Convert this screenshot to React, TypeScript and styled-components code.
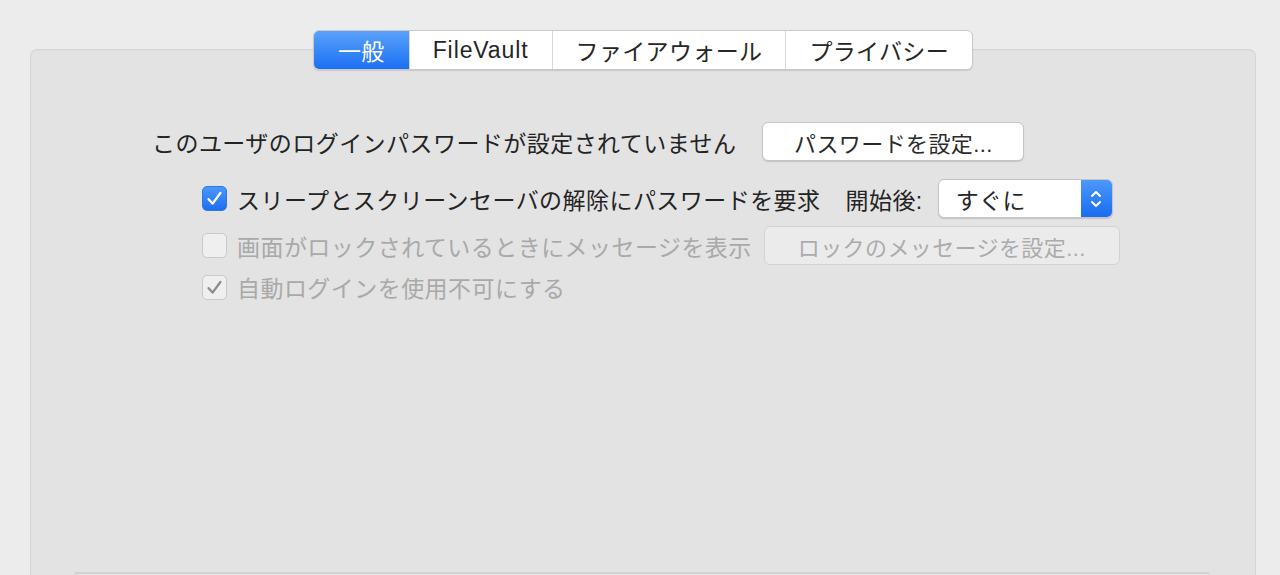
import React from "react";
import styled, { createGlobalStyle, css } from "styled-components";

const Global = createGlobalStyle`
  html, body { margin: 0; padding: 0; }
  body {
    background: #ececec;
    font-family: "Liberation Sans", "Noto Sans CJK JP", sans-serif;
    overflow: hidden;
    height: 575px;
  }
`;

const Page = styled.div`
  padding: 49px 24px 0 30px;
`;

const Panel = styled.div`
  background: #e3e3e3;
  border: 1px solid #d6d6d6;
  border-bottom: none;
  border-radius: 7px 7px 0 0;
  height: 540px;
  display: flex;
  flex-direction: column;
  box-shadow: inset 0 1px 1px rgba(0, 0, 0, 0.03);
`;

const TabRow = styled.div`
  display: flex;
  justify-content: center;
  margin-top: -20px;
`;

const TabBar = styled.div`
  display: flex;
  height: 38px;
  background: #ffffff;
  border: 1px solid #c9c9c9;
  border-radius: 6px;
  box-shadow: 0 1px 1px rgba(0, 0, 0, 0.12);
  overflow: hidden;
`;

const Tab = styled.div<{ $active?: boolean; $first?: boolean; $latin?: boolean }>`
  display: flex;
  align-items: center;
  padding: 0 23px;
  font-size: 23px;
  letter-spacing: ${(p) => (p.$latin ? "0.9px" : "0.35px")};
  color: #262626;
  border-left: ${(p) => (p.$first ? "none" : "1px solid #d8d8d8")};
  ${(p) =>
    p.$active &&
    css`
      background: linear-gradient(#5aa2fb, #1b6ff3);
      color: #ffffff;
      border-left: none;
      padding: 0 24px;
    `}
`;

const Content = styled.div`
  display: flex;
  flex-direction: column;
  padding-left: 121px;
  margin-top: 52px;
`;

const Row = styled.div<{ $indent?: number; $mt?: number; $h?: number }>`
  display: flex;
  align-items: center;
  height: ${(p) => p.$h ?? 39}px;
  margin-left: ${(p) => p.$indent ?? 0}px;
  margin-top: ${(p) => p.$mt ?? 0}px;
`;

const Label = styled.span<{ $disabled?: boolean; $gap?: number }>`
  font-size: 23px;
  letter-spacing: 0.45px;
  color: ${(p) => (p.$disabled ? "#a9a9a9" : "#232323")};
  margin-right: ${(p) => p.$gap ?? 0}px;
  white-space: nowrap;
`;

const Button = styled.div<{ $disabled?: boolean; $w: number }>`
  box-sizing: border-box;
  width: ${(p) => p.$w}px;
  height: 39px;
  display: flex;
  align-items: center;
  justify-content: center;
  border-radius: 6px;
  font-size: 22px;
  letter-spacing: 0.4px;
  ${(p) =>
    p.$disabled
      ? css`
          background: #ebebeb;
          border: 1px solid #d3d3d3;
          color: #ababab;
        `
      : css`
          background: #ffffff;
          border: 1px solid #c5c5c5;
          color: #2a2a2a;
          box-shadow: 0 1px 1px rgba(0, 0, 0, 0.14);
        `}
`;

const Box = styled.div<{ $variant: "on" | "off" | "dimOn" }>`
  box-sizing: border-box;
  width: 25px;
  height: 25px;
  border-radius: 5px;
  margin-right: 10px;
  display: flex;
  align-items: center;
  justify-content: center;
  ${(p) =>
    p.$variant === "on"
      ? css`
          background: linear-gradient(#4b97fa, #1e6ff1);
          border: 1px solid #2f76e0;
        `
      : css`
          background: #efefef;
          border: 1px solid #c9c9c9;
        `}
`;

const Popup = styled.div`
  box-sizing: border-box;
  width: 175px;
  height: 39px;
  display: flex;
  border: 1px solid #c4c4c4;
  border-radius: 6px;
  background: #ffffff;
  box-shadow: 0 1px 1px rgba(0, 0, 0, 0.14);
  overflow: hidden;
`;

const PopupText = styled.div`
  flex: 1;
  display: flex;
  align-items: center;
  padding-left: 17px;
  font-size: 23px;
  letter-spacing: 0.4px;
  color: #262626;
`;

const PopupArrows = styled.div`
  width: 31px;
  background: linear-gradient(#4c98fa, #1a6cf2);
  display: flex;
  align-items: center;
  justify-content: center;
`;

const Footer = styled.div`
  margin: auto 46px 0 44px;
  height: 16px;
  border-top: 2px solid #d2d2d2;
`;

const Check = ({ color }: { color: string }) => (
  <svg width="19" height="19" viewBox="0 0 19 19">
    <path
      d="M3.6 10.2 L7.6 14.6 L15.4 4"
      fill="none"
      stroke={color}
      strokeWidth="2.3"
      strokeLinecap="round"
      strokeLinejoin="round"
    />
  </svg>
);

const Checkbox = ({ variant }: { variant: "on" | "off" | "dimOn" }) => (
  <Box $variant={variant}>
    {variant === "on" && <Check color="#ffffff" />}
    {variant === "dimOn" && <Check color="#8c8c8c" />}
  </Box>
);

export default function App() {
  return (
    <>
      <Global />
      <Page>
        <Panel>
          <TabRow>
            <TabBar>
              <Tab $active $first>一般</Tab>
              <Tab $latin>FileVault</Tab>
              <Tab>ファイアウォール</Tab>
              <Tab>プライバシー</Tab>
            </TabBar>
          </TabRow>
          <Content>
            <Row>
              <Label $gap={26}>このユーザのログインパスワードが設定されていません</Label>
              <Button $w={262}>パスワードを設定...</Button>
            </Row>
            <Row $indent={50} $mt={18}>
              <Checkbox variant="on" />
              <Label $gap={25}>スリープとスクリーンセーバの解除にパスワードを要求</Label>
              <Label $gap={15}>開始後:</Label>
              <Popup>
                <PopupText>すぐに</PopupText>
                <PopupArrows>
                  <svg width="14" height="22" viewBox="0 0 14 22">
                    <path
                      d="M3 8 L7 4 L11 8 M3 14 L7 18 L11 14"
                      fill="none"
                      stroke="#ffffff"
                      strokeWidth="2"
                      strokeLinecap="round"
                      strokeLinejoin="round"
                    />
                  </svg>
                </PopupArrows>
              </Popup>
            </Row>
            <Row $indent={50} $mt={8}>
              <Checkbox variant="off" />
              <Label $disabled $gap={12}>画面がロックされているときにメッセージを表示</Label>
              <Button $disabled $w={356}>ロックのメッセージを設定...</Button>
            </Row>
            <Row $indent={50} $mt={5} $h={34}>
              <Checkbox variant="dimOn" />
              <Label $disabled>自動ログインを使用不可にする</Label>
            </Row>
          </Content>
          <Footer />
        </Panel>
      </Page>
    </>
  );
}
